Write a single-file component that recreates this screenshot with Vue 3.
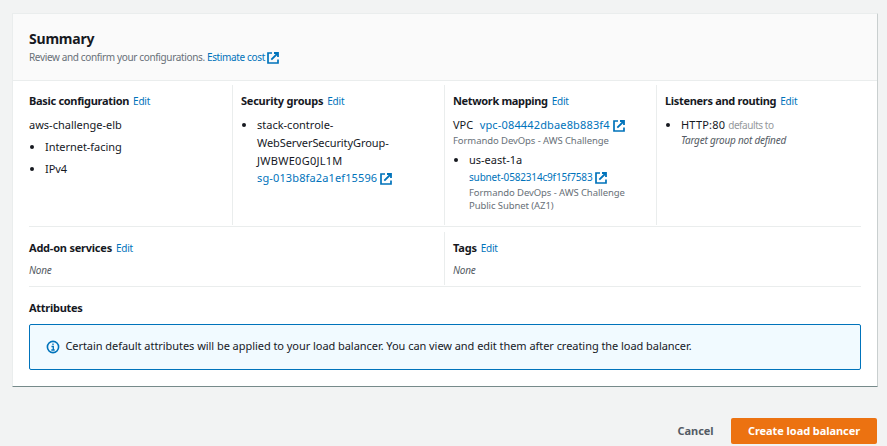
<script setup>
import { h } from 'vue'

const ExternalIcon = () =>
  h('svg', { class: 'external', viewBox: '0 0 12 12', width: 12, height: 12, 'aria-hidden': 'true' }, [
    h('path', { d: 'M5 1H1v10h10V7.5', fill: 'none', stroke: 'currentColor', 'stroke-width': 1.7 }),
    h('path', { d: 'M7 1h4v4M11 1L4.3 7.7', fill: 'none', stroke: 'currentColor', 'stroke-width': 1.8 }),
  ])
</script>

<template>
  <main class="page">
    <section class="card">
      <header class="card-header">
        <h2 class="title">Summary</h2>
        <p class="description">Review and confirm your configurations. <a class="link">Estimate cost</a><ExternalIcon class="external" /></p>
      </header>
      <div class="card-body">
        <div class="row row-main">
          <div class="col">
            <h3 class="heading"><span class="h-basic">Basic configuration</span><a class="edit">Edit</a></h3>
            <p class="text name">aws-challenge-elb</p>
            <ul class="list">
              <li class="text item">Internet-facing</li>
              <li class="text item">IPv4</li>
            </ul>
          </div>
          <div class="col">
            <h3 class="heading"><span class="h-security">Security groups</span><a class="edit">Edit</a></h3>
            <ul class="list">
              <li class="text">
                <div>stack-controle-</div>
                <div class="group-name">WebServerSecurityGroup-</div>
                <div class="group-suffix">JWBWE0G0JL1M</div>
                <div class="group-id"><a class="link">sg-013b8fa2a1ef15596</a><ExternalIcon class="external" /></div>
              </li>
            </ul>
          </div>
          <div class="col">
            <h3 class="heading"><span class="h-network">Network mapping</span><a class="edit">Edit</a></h3>
            <p class="text vpc"><span>VPC</span><a class="link">vpc-084442dbae8b883f4</a><ExternalIcon class="external" /></p>
            <p class="small vpc-name">Formando DevOps - AWS Challenge</p>
            <ul class="list">
              <li class="text">
                <div>us-east-1a</div>
                <div class="subnet"><a class="link">subnet-0582314c9f15f7583</a><ExternalIcon class="external" /></div>
                <div class="small">Formando DevOps - AWS Challenge<br>Public Subnet (AZ1)</div>
              </li>
            </ul>
          </div>
          <div class="col">
            <h3 class="heading"><span class="h-listeners">Listeners and routing</span><a class="edit">Edit</a></h3>
            <ul class="list">
              <li class="text">
                <div class="http"><span class="port">HTTP:80</span><span class="muted">defaults to</span></div>
                <div class="target">Target group not defined</div>
              </li>
            </ul>
          </div>
        </div>
        <div class="row row-extra">
          <div class="col">
            <h3 class="heading"><span class="h-addon">Add-on services</span><a class="edit">Edit</a></h3>
            <p class="none">None</p>
          </div>
          <div class="col">
            <h3 class="heading"><span class="h-tags">Tags</span><a class="edit">Edit</a></h3>
            <p class="none">None</p>
          </div>
        </div>
        <h3 class="heading attributes">Attributes</h3>
        <div class="alert">
          <svg class="info" viewBox="0 0 14 14" width="14" height="14" aria-hidden="true">
            <circle cx="7" cy="7" r="5.6" fill="none" stroke="currentColor" stroke-width="1.6" />
            <path d="M7 3.5v1.5M5.5 6.5H7.3V10M5.3 10h3.4" fill="none" stroke="currentColor" stroke-width="1.3" />
          </svg>
          <span class="alert-text">Certain default attributes will be applied to your load balancer. You can view and edit them after creating the load balancer.</span>
        </div>
      </div>
    </section>
    <footer class="actions">
      <button class="cancel">Cancel</button>
      <button class="create">Create load balancer</button>
    </footer>
  </main>
</template>

<style>
body { background: #f2f3f3; overflow: hidden; }
</style>

<style scoped>
.page {
  box-sizing: border-box;
  width: 887px;
  height: 446px;
  padding: 13px 9px 0 12px;
  overflow: hidden;
  font-family: "Noto Sans", sans-serif;
  font-size: 11px;
  color: #16191f;
}
h2, h3, p, ul { margin: 0; padding: 0; }
.card {
  box-sizing: border-box;
  height: 374px;
  background: #fff;
  border: 1px solid #eaeded;
  border-right-color: #c9cfcf;
  border-bottom-color: #768a8a;
  border-radius: 1px;
}
.card-header {
  box-sizing: border-box;
  height: 67px;
  padding: 15px 16px 0;
  background: #fafafa;
  border-bottom: 1px solid #eaeded;
}
.title { font-size: 14px; line-height: 20px; font-weight: 700; letter-spacing: -0.2px; }
.description { margin-top: -1px; font-size: 10px; line-height: 18px; letter-spacing: -0.36px; color: #687078; white-space: nowrap; }
.link, .edit { color: #0073bb; }
.external { display: inline-block; width: 12px; height: 12px; margin-left: 3px; color: #0073bb; vertical-align: -3px; }
.description .external { margin-left: 2.5px; }
.card-body { padding: 4px 16px 0; }
.row { display: grid; border-bottom: 1px solid #eaeded; }
.row-main { grid-template-columns: 203px 212px 212px 205px; height: 141px; }
.row-extra { grid-template-columns: 415px 417px; height: 54px; margin-top: 5px; }
.row .col { height: calc(100% - 1px); white-space: nowrap; }
.col + .col { padding-left: 8px; border-left: 1px solid #eaeded; }
.heading { display: flex; align-items: baseline; gap: 4px; height: 18px; padding-top: 7px; font-size: 11px; line-height: 18px; font-weight: 700; white-space: nowrap; }
.h-basic, .h-listeners { letter-spacing: -0.31px; }
.h-security { letter-spacing: -0.23px; }
.h-network { letter-spacing: -0.34px; }
.h-addon { letter-spacing: -0.22px; }
.h-tags { letter-spacing: -0.2px; }
.edit { font-size: 10px; font-weight: 400; letter-spacing: -0.22px; }
.text { line-height: 18px; }
.heading + .text, .heading + .list { margin-top: 6px; }
.list { padding-left: 16px; list-style: disc; }
.item { margin-top: 4px; letter-spacing: -0.05px; }
.group-name { letter-spacing: -0.08px; }
.group-suffix { letter-spacing: 0.27px; }
.group-id { line-height: 16px; letter-spacing: 0.13px; }
.small { font-size: 9.5px; line-height: 13px; letter-spacing: -0.08px; color: #687078; }
.vpc { display: flex; align-items: center; gap: 6.5px; }
.vpc .link { letter-spacing: 0.15px; }
.vpc .external { margin: 2px 0 0 -3px; }
.vpc-name { margin-bottom: 4px; }
.subnet { font-size: 10px; line-height: 17px; letter-spacing: -0.17px; }
.http { display: flex; align-items: baseline; gap: 3px; }
.port { letter-spacing: 0.2px; }
.muted { font-size: 10px; letter-spacing: -0.44px; color: #95999d; }
.target { font-size: 10px; line-height: 13px; letter-spacing: -0.22px; font-style: italic; color: #545b64; }
.none { margin-top: 4px; font-size: 10px; line-height: 18px; letter-spacing: -0.25px; font-style: italic; color: #545b64; }
.attributes { padding-top: 12px; letter-spacing: -0.28px; }
.alert {
  display: flex;
  align-items: center;
  box-sizing: border-box;
  height: 46px;
  margin-top: 7px;
  padding-left: 15.6px;
  background: #f1faff;
  border: 1px solid #0073bb;
  border-radius: 2px;
  white-space: nowrap;
}
.info { margin-right: 5.8px; color: #0073bb; }
.alert-text { padding-bottom: 3px; letter-spacing: -0.049px; }
.actions { display: flex; justify-content: flex-end; margin-top: 31px; padding-right: 1px; }
button { height: 26px; padding: 0 0 1px; border: 0; border-radius: 2px; font: 700 11px "Noto Sans", sans-serif; letter-spacing: -0.06px; }
.cancel { width: 71px; color: #545b64; background: transparent; }
.create { width: 146px; color: #fff; background: #ec7211; }
</style>
